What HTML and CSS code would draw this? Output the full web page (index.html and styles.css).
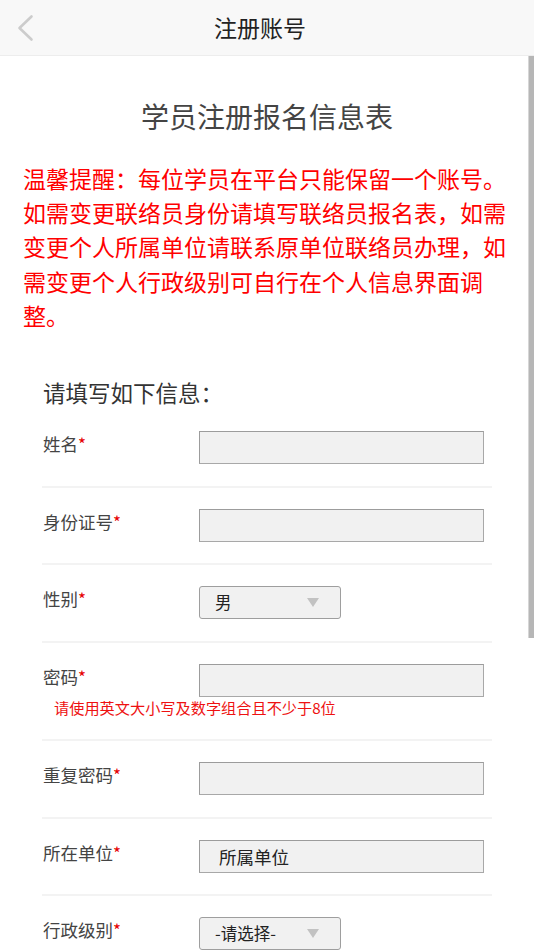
FILE: index.html
```html
<!DOCTYPE html>
<html lang="zh-CN">
<head>
<meta charset="utf-8">
<title>注册账号</title>
<link rel="stylesheet" href="styles.css">
</head>
<body>
<header class="topbar">
  <div class="back">
    <svg class="back-icon" viewBox="0 0 20 30" width="20" height="30" aria-hidden="true">
      <polyline points="16.5,3.5 4.5,15 16.5,26.5" fill="none" stroke="#cccccc" stroke-width="2.6" stroke-linecap="round" stroke-linejoin="round"/>
    </svg>
  </div>
  <h1 class="topbar-title">注册账号</h1>
  <div class="spacer"></div>
</header>

<main class="content">
  <h2 class="form-title">学员注册报名信息表</h2>
  <p class="notice">温馨提醒：每位学员在平台只能保留一个账号。如需变更联络员身份请填写联络员报名表，如需变更个人所属单位请联系原单位联络员办理，如需变更个人行政级别可自行在个人信息界面调整。</p>

  <section class="form">
    <h3 class="form-heading">请填写如下信息：</h3>

    <div class="row">
      <label class="label">姓名<span class="req">*</span></label>
      <input class="field" type="text">
    </div>

    <div class="row">
      <label class="label">身份证号<span class="req">*</span></label>
      <input class="field" type="text">
    </div>

    <div class="row">
      <label class="label">性别<span class="req">*</span></label>
      <div class="select"><span class="select-text">男</span><span class="caret"></span></div>
    </div>

    <div class="row row-hint">
      <label class="label">密码<span class="req">*</span></label>
      <input class="field" type="password">
      <p class="hint">请使用英文大小写及数字组合且不少于8位</p>
    </div>

    <div class="row">
      <label class="label">重复密码<span class="req">*</span></label>
      <input class="field" type="password">
    </div>

    <div class="row">
      <label class="label">所在单位<span class="req">*</span></label>
      <input class="field field-value" type="text" value="所属单位" readonly>
    </div>

    <div class="row">
      <label class="label">行政级别<span class="req">*</span></label>
      <div class="select"><span class="select-text">-请选择-</span><span class="caret"></span></div>
    </div>
  </section>
</main>

<div class="scrollbar" aria-hidden="true"></div>
</body>
</html>
```

FILE: styles.css
```css
html {
  overflow: hidden;
}

body {
  margin: 0;
  background: #ffffff;
  font-family: "Noto Sans CJK SC", "Noto Sans", sans-serif;
  color: #333333;
  position: relative;
}

.topbar {
  display: grid;
  grid-template-columns: 50px 1fr 64px;
  align-items: center;
  height: 55px;
  background: #f8f8f8;
  border-bottom: 1px solid #ededed;
}

.back {
  display: flex;
  align-items: center;
  padding-left: 15px;
}

.back-icon {
  display: block;
}

.topbar-title {
  margin: 0;
  text-align: center;
  font-size: 23px;
  font-weight: normal;
  line-height: 55px;
  color: #222222;
}

.content {
  padding: 0 23px;
}

.form-title {
  margin: 40px 0 0;
  text-align: center;
  font-size: 28px;
  font-weight: normal;
  line-height: 40px;
  color: #444444;
}

.notice {
  margin: 25px 0 0;
  font-size: 23px;
  line-height: 34.2px;
  color: #ff0000;
}

.form {
  margin: 0 19px;
}

.form-heading {
  margin: 45px 0 3px;
  padding-left: 1px;
  font-size: 22.5px;
  font-weight: normal;
  line-height: 30px;
  color: #333333;
}

.row {
  display: flex;
  flex-wrap: wrap;
  align-items: flex-start;
  padding: 21px 0 21.5px 1px;
  border-bottom: 2px solid #f3f3f3;
}

.label {
  width: 156px;
  font-size: 17.5px;
  line-height: 26px;
  color: #444444;
}

.req {
  color: #e60000;
  font-size: 17px;
}

.field {
  box-sizing: border-box;
  width: 285px;
  height: 33px;
  margin: 0;
  padding: 0 0 0 19px;
  border: 1px solid #a8a8a8;
  border-top-color: #9c9c9c;
  border-left-color: #9c9c9c;
  border-radius: 0;
  background: #f1f1f1;
  font-family: "Noto Sans CJK SC", "Noto Sans", sans-serif;
  font-size: 17.5px;
  color: #222222;
  outline: none;
  -webkit-appearance: none;
  appearance: none;
}

.select {
  box-sizing: border-box;
  display: flex;
  align-items: center;
  width: 142px;
  height: 33px;
  padding: 0 0 0 15px;
  border: 1px solid #9e9e9e;
  border-radius: 3px;
  background: #f1f1f1;
}

.select-text {
  flex: 1;
  font-size: 16.5px;
  line-height: 31px;
  color: #222222;
}

.caret {
  width: 0;
  height: 0;
  margin-right: 21px;
  border-left: 6px solid transparent;
  border-right: 6px solid transparent;
  border-top: 9px solid #c2c2c2;
}

.hint {
  flex-basis: 100%;
  margin: 0 0 1px 11px;
  font-size: 15.2px;
  line-height: 20px;
  color: #ee1111;
}

.scrollbar {
  position: absolute;
  top: 56px;
  right: 0;
  width: 5px;
  height: 582px;
  background: #b6b6b6;
  border-left: 1px solid #d6d6d6;
}
```
